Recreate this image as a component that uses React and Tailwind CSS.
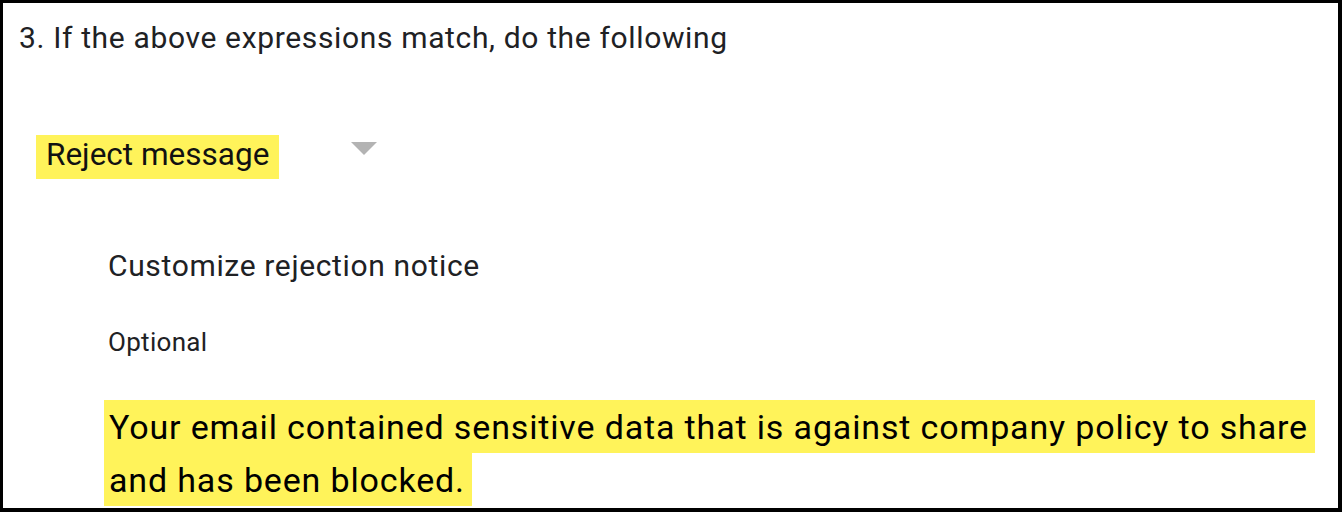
import React from 'react';

const HL = 'bg-[#fff35a]';

export default function App() {
  return (
    <div className="w-[1342px] h-[512px] bg-white overflow-hidden">
      <div className="h-full border-t-[3px] border-l-[3px] border-r-4 border-b-4 border-black font-['Roboto',sans-serif] text-[#202124]">
        {/* step heading */}
        <div className="pt-[17px] pl-[16px] text-[30px] leading-[36px] tracking-[0.65px]">
          3. If the above expressions match, do the following
        </div>

        {/* action select */}
        <div className="mt-[79px] ml-[33px] flex items-start">
          <div className={`${HL} px-[10px] pb-[4px] text-[31.5px] leading-[40px] text-[#111]`}>
            Reject message
          </div>
          <svg className="ml-[72px] mt-[7px]" width="26" height="13" viewBox="0 0 26 13">
            <path d="M0 0h26L13 13z" fill="#b3b3b3" />
          </svg>
        </div>

        {/* rejection notice */}
        <div className="ml-[105px] mt-[69px] text-[30px] leading-[36px] tracking-[0.65px]">
          Customize rejection notice
        </div>
        <div className="ml-[105px] mt-[43px] text-[26px] leading-[30px] tracking-[0.3px]">Optional</div>

        <div className="ml-[101px] mt-[44px] text-[34px] leading-[53px] tracking-[0.85px] text-black">
          <span className={`${HL} pt-[7px] pb-[6px] pl-[5px] pr-[7px] box-decoration-clone`}>
            Your email contained sensitive data that is against company policy to share and has been blocked.
          </span>
        </div>
      </div>
    </div>
  );
}
